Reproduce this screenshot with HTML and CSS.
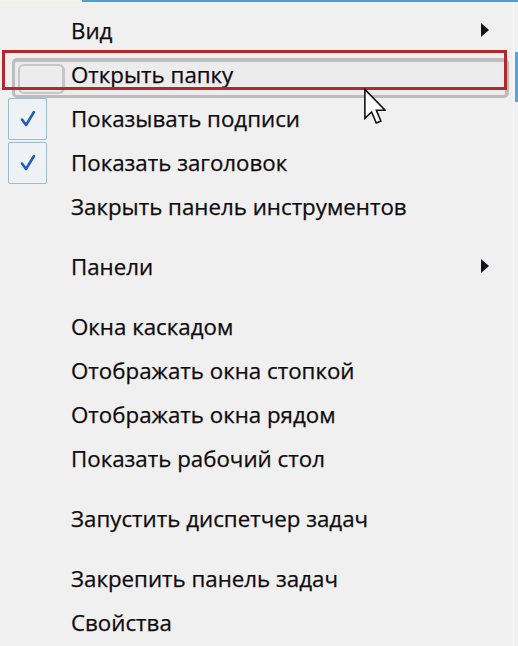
FILE: index.html
```html
<!DOCTYPE html>
<html lang="ru">
<head>
<meta charset="utf-8">
<link rel="stylesheet" href="styles.css">
</head>
<body>
<div class="topline"><span class="pale"></span><span class="blue"></span></div>
<div class="edge"></div>
<ul class="menu">
  <li class="item"><span class="gutter"></span><span class="label">Вид</span><span class="arrow"></span></li>
  <li class="item hot">
    <span class="hl"><span class="hl-icon"></span></span>
    <span class="gutter"></span><span class="label">Открыть папку</span>
    <span class="redbox"></span>
    <svg class="cursor" width="22" height="37" viewBox="0 0 12.5 20.5"><path d="M0.5 0.5 L0.5 17 L4.3 13.4 L7 19.6 L9.6 18.5 L7 12.4 L12 12.4 Z" fill="#fff" stroke="#111" stroke-width="0.9" stroke-linejoin="miter"/></svg>
  </li>
  <li class="item"><span class="gutter"><span class="check"><svg width="16" height="18" viewBox="0 0 16 18"><path d="M2 9.5 L6 15 L14 2" fill="none" stroke="#1f5fb5" stroke-width="2.6" stroke-linecap="round" stroke-linejoin="round"/></svg></span></span><span class="label">Показывать подписи</span></li>
  <li class="item"><span class="gutter"><span class="check"><svg width="16" height="18" viewBox="0 0 16 18"><path d="M2 9.5 L6 15 L14 2" fill="none" stroke="#1f5fb5" stroke-width="2.6" stroke-linecap="round" stroke-linejoin="round"/></svg></span></span><span class="label">Показать заголовок</span></li>
  <li class="item"><span class="gutter"></span><span class="label">Закрыть панель инструментов</span></li>
  <li class="sep"></li>
  <li class="item"><span class="gutter"></span><span class="label">Панели</span><span class="arrow"></span></li>
  <li class="sep"></li>
  <li class="item"><span class="gutter"></span><span class="label">Окна каскадом</span></li>
  <li class="item"><span class="gutter"></span><span class="label">Отображать окна стопкой</span></li>
  <li class="item"><span class="gutter"></span><span class="label">Отображать окна рядом</span></li>
  <li class="item"><span class="gutter"></span><span class="label">Показать рабочий стол</span></li>
  <li class="sep"></li>
  <li class="item"><span class="gutter"></span><span class="label">Запустить диспетчер задач</span></li>
  <li class="sep"></li>
  <li class="item"><span class="gutter"></span><span class="label">Закрепить панель задач</span></li>
  <li class="item"><span class="gutter"></span><span class="label">Свойства</span></li>
</ul>
</body>
</html>
```
FILE: styles.css
```css
html, body {
  margin: 0;
  padding: 0;
  background: #f0f0f0;
  width: 518px;
  height: 646px;
  overflow: hidden;
  position: relative;
}
body {
  font-family: "Open Sans", "Noto Sans", sans-serif;
  color: #0e0a0e;
}
.topline {
  display: flex;
  height: 2px;
}
.pale { width: 82px; background: #f7f5e6; }
.blue { flex: 1; background: #4a9fd6; }
.edge {
  position: absolute;
  right: 0;
  top: 52px;
  width: 3px;
  height: 50px;
  background: #5aa6d8;
}
.menu {
  list-style: none;
  margin: 0;
  padding: 7px 0 0 0;
  border-right: 1px solid #fafafa;
  width: 513px;
  height: 637px;
}
.item {
  position: relative;
  height: 44px;
  display: flex;
  align-items: center;
}
.sep { height: 16px; }
.gutter {
  width: 71px;
  height: 44px;
  flex: none;
  display: flex;
  align-items: center;
}
.label {
  flex: 1;
  font-size: 22.3px;
  line-height: 44px;
  white-space: nowrap;
  position: relative;
  z-index: 2;
  -webkit-text-stroke: 0.25px #0e0a0e;
}
.arrow {
  width: 0;
  height: 0;
  border-top: 7px solid transparent;
  border-bottom: 7px solid transparent;
  border-left: 8px solid #1a1218;
  margin-right: 24px;
  margin-top: -2px;
}
.check {
  margin-left: 8px;
  width: 37px;
  height: 40px;
  border: 1.5px solid #9cbdce;
  border-radius: 2px;
  display: flex;
  align-items: center;
  justify-content: center;
  background: #eef2f4;
}
.hl {
  position: absolute;
  left: 12px;
  right: 4px;
  top: 5px;
  height: 40px;
  box-sizing: border-box;
  border: 4px solid #bdbdbd;
  border-left-width: 3px;
  border-bottom-width: 3px;
  border-radius: 5px;
  background: #ececec;
  z-index: 1;
}
.hl-icon {
  position: absolute;
  left: 3px;
  top: 2px;
  width: 42px;
  height: 26px;
  border: 2px solid #c6c6c6;
  border-radius: 6px;
  border-right-width: 3px;
}
.redbox {
  position: absolute;
  left: 2px;
  right: 6px;
  top: -3px;
  height: 40px;
  box-sizing: border-box;
  border: 3px solid #b3282a;
  z-index: 3;
}
.cursor {
  position: absolute;
  left: 364px;
  top: 35px;
  z-index: 4;
}
```
